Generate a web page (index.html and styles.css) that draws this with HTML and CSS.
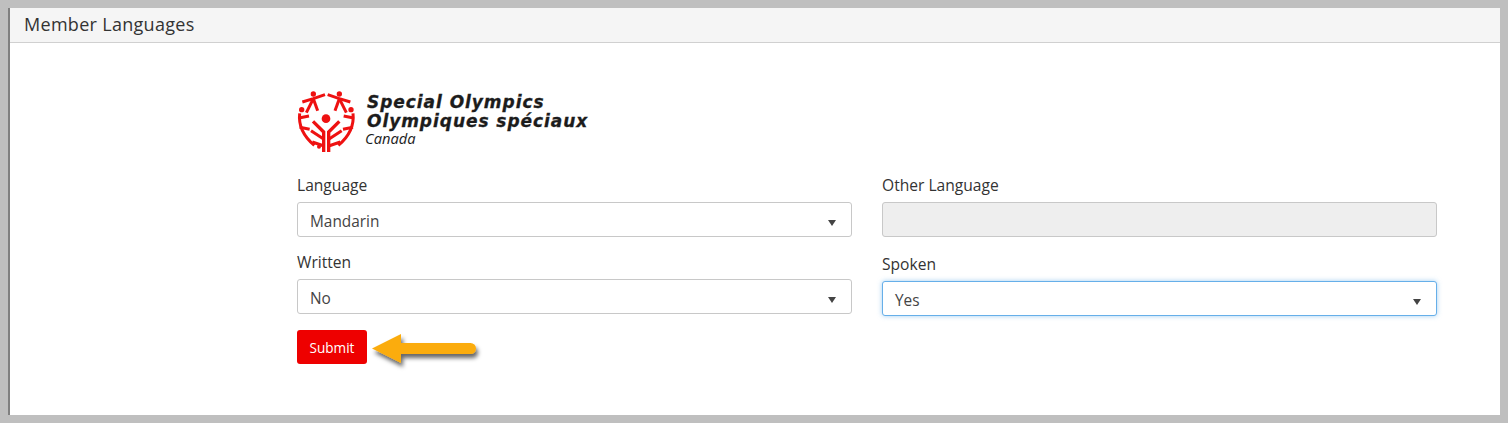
FILE: index.html
```html
<!DOCTYPE html>
<html lang="en">
<head>
<meta charset="utf-8">
<title>Member Languages</title>
<link rel="stylesheet" href="styles.css">
</head>
<body>
<main class="card">
  <header class="card-head">Member Languages</header>
  <div class="card-body">
    <div class="logo">
      <svg class="logo-mark" viewBox="0 0 210 192" width="70" height="64" aria-hidden="true">
        <g fill="#ee1111">
          <circle cx="93" cy="92" r="13"/>
          <circle cx="55" cy="18" r="8"/>
          <circle cx="133" cy="18" r="8"/>
          <circle cx="20" cy="65" r="8"/>
          <circle cx="168" cy="65" r="8"/>
          <circle cx="72" cy="176" r="6"/>
        </g>
        <g fill="none" stroke="#ee1111" stroke-linecap="butt" stroke-linejoin="miter">
          <g stroke-width="10">
            <path d="M86 192V132L54 100"/>
            <path d="M101 192V132L133 100"/>
          </g>
          <g stroke-width="9">
            <path d="M87 154 48 128"/>
            <path d="M101 154 140 128"/>
            <path d="M87 174 52 162"/>
            <path d="M101 174 136 162"/>
            <path d="M90 20 55 32 22 42"/>
            <path d="M98 20 133 32 166 42"/>
            <path d="M55 32 34 74"/>
            <path d="M133 32 154 74"/>
            <path d="M55 32 68 68"/>
            <path d="M133 32 120 68"/>
            <path d="M14 76Q8 130 58 172"/>
            <path d="M174 76Q180 130 130 172"/>
            <path d="M12 90 42 84"/>
            <path d="M176 90 146 84"/>
            <path d="M14 118 44 124"/>
            <path d="M174 118 144 124"/>
          </g>
        </g>
      </svg>
      <div class="logo-text">
        <div class="logo-line">Special Olympics</div>
        <div class="logo-line">Olympiques spéciaux</div>
        <div class="logo-sub">Canada</div>
      </div>
    </div>

    <form class="form-grid">
      <div class="field">
        <label class="label">Language</label>
        <div class="select"><span>Mandarin</span><i class="caret"></i></div>
      </div>
      <div class="field">
        <label class="label">Other Language</label>
        <div class="select disabled"></div>
      </div>
      <div class="field">
        <label class="label">Written</label>
        <div class="select"><span>No</span><i class="caret"></i></div>
      </div>
      <div class="field shifted">
        <label class="label">Spoken</label>
        <div class="select focused"><span>Yes</span><i class="caret"></i></div>
      </div>
    </form>

    <div class="actions">
      <button class="submit" type="button">Submit</button>
      <svg class="arrow" viewBox="0 0 120 60" width="120" height="60" aria-hidden="true">
        <defs>
          <filter id="arrow-shadow" x="-20%" y="-30%" width="140%" height="170%">
            <feDropShadow dx="2" dy="4" stdDeviation="2.2" flood-color="#000" flood-opacity="0.6"/>
          </filter>
        </defs>
        <path filter="url(#arrow-shadow)" fill="#fbac0c" d="M7 19.5 36 5V14H105.5a5.5 5.5 0 0 1 0 11H36V34Z"/>
      </svg>
    </div>
  </div>
</main>
</body>
</html>
```
FILE: styles.css
```css
* { box-sizing: border-box; }
html, body { height: 100%; }
body {
  margin: 0;
  padding: 8px;
  background: #bfbfbf;
  font-family: "Open Sans", "Noto Sans", sans-serif;
  color: #3a3a3a;
  overflow: hidden;
}
.card {
  height: 407px;
  background: #fff;
  border-left: 2px solid #808080;
}
.card-head {
  height: 35px;
  padding: 5px 14px 0;
  background: #f5f5f5;
  border-bottom: 1px solid #d0d0d0;
  font-size: 18px;
  line-height: 22px;
  letter-spacing: 0.3px;
  color: #333;
}
.card-body {
  padding: 45px 63px 0 287px;
}
.logo {
  display: flex;
  align-items: flex-start;
  height: 87px;
  gap: 2px;
}
.logo-mark { flex: none; margin-left: -2px; }
.logo-text { padding-top: 5px; color: #1c1c1c; }
.logo-line {
  font-family: "DejaVu Sans", sans-serif;
  font-weight: 700;
  font-style: italic;
  font-size: 17px;
  line-height: 18.5px;
  letter-spacing: 0.95px;
  white-space: nowrap;
  -webkit-text-stroke: 0.3px #1c1c1c;
}
.logo-sub {
  font-family: "Open Sans", sans-serif;
  font-style: italic;
  font-size: 14.7px;
  line-height: 17px;
  margin-left: -2px;
}
.form-grid {
  display: grid;
  grid-template-columns: 555px 555px;
  column-gap: 30px;
  row-gap: 15px;
}
.field { display: flex; flex-direction: column; }
.shifted { padding-top: 2px; }
.label {
  font-size: 15.6px;
  line-height: 20px;
  margin-bottom: 7px;
  color: #333;
}
.select {
  height: 35px;
  display: flex;
  align-items: center;
  justify-content: space-between;
  padding: 4px 15px 0 12px;
  border: 1px solid #c8c8c8;
  border-radius: 3px;
  background: #fff;
  font-size: 15.4px;
  color: #444;
}
.disabled { background: #eeeeee; }
.focused {
  border-color: #66afe9;
  box-shadow: 0 0 5px rgba(102, 175, 233, 0.6);
}
.caret {
  width: 0;
  height: 0;
  margin-top: 2px;
  border-left: 4px solid transparent;
  border-right: 4px solid transparent;
  border-top: 6px solid #444;
}
.actions {
  position: relative;
  margin-top: 14px;
}
.submit {
  display: block;
  width: 70px;
  height: 34px;
  padding: 0;
  border: 0;
  border-radius: 3px;
  background: #ee0000;
  color: #fff;
  font-family: inherit;
  font-size: 13.6px;
}
.arrow {
  position: absolute;
  left: 68px;
  top: -1px;
}
```
